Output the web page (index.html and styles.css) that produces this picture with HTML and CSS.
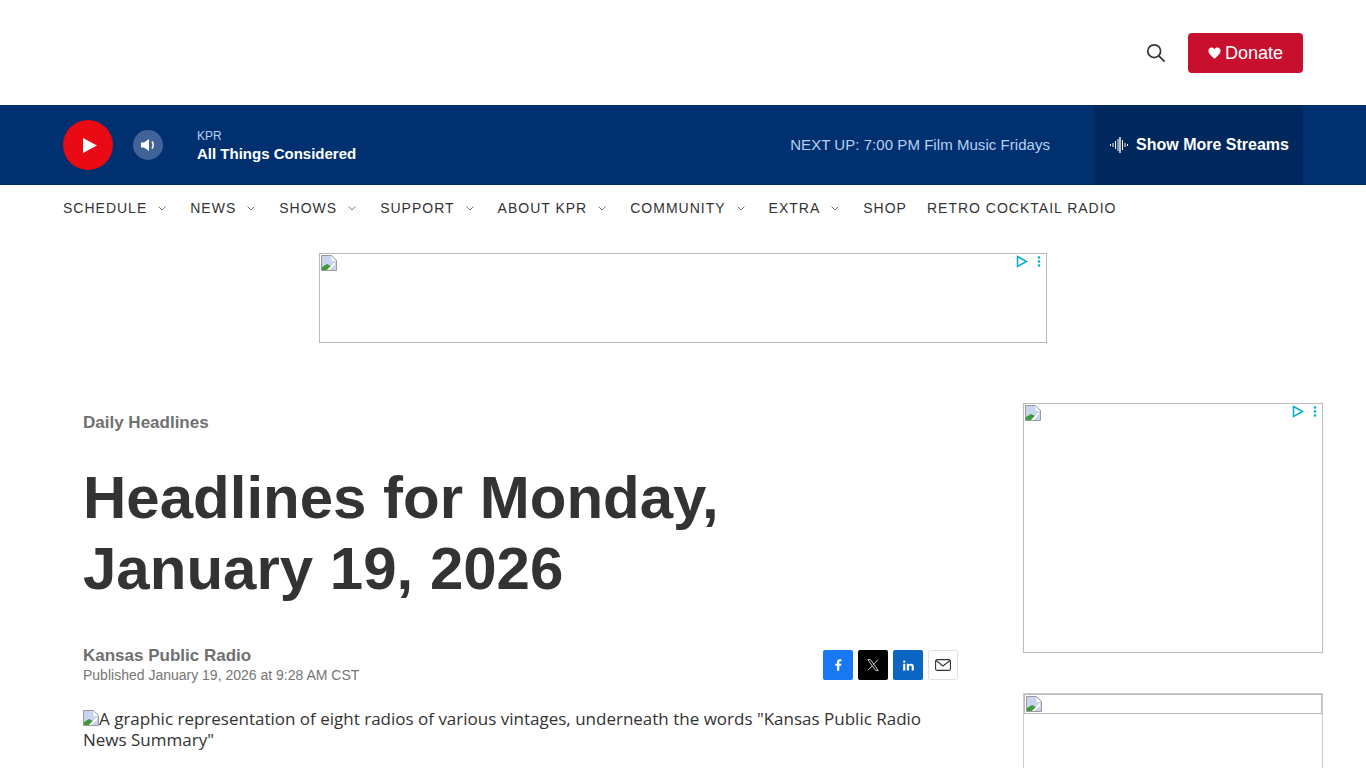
FILE: index.html
```html
<!DOCTYPE html>
<html lang="en">
<head>
    <meta charset="UTF-8">
    <title>Headlines for Monday, January 19, 2026 | KPR</title>
    <link rel="stylesheet" href="styles.css">
</head>
<body>
    <header class="top-bar">
        <button class="search-btn" aria-label="Search">
            <svg width="20" height="20" viewBox="0 0 20 20" fill="none" stroke="#333" stroke-width="1.7"><circle cx="8.2" cy="8.2" r="6.4"/><path d="M12.8 12.8 18.6 18.6"/></svg>
        </button>
        <a class="donate-btn" href="#">
            <svg width="13" height="12" viewBox="0 0 14 13" fill="#fff"><path d="M7 12.6C5 10.8.4 7.8.4 4.1.4 2 1.9.6 3.8.6 5.1.6 6.3 1.3 7 2.4 7.7 1.3 8.9.6 10.200.6c1.900 0 3.400 1.400 3.400 3.500 0 3.700-4.600 6.700-6.600 8.500z"/></svg>
            Donate
        </a>
    </header>

    <section class="player">
        <button class="play-btn" aria-label="Play">
            <svg width="14" height="15" viewBox="0 0 14 15" fill="#fff"><path d="M0 0 14 7.500 0 15z"/></svg>
        </button>
        <button class="volume-btn" aria-label="Volume">
            <svg width="16" height="14" viewBox="0 0 16 14"><path fill="#fff" d="M0 4.500h3L8 1v12L3 9.500H0z"/><path fill="none" stroke="#fff" stroke-width="1.500" d="M11 3.500c1.400 2 1.400 5 0 7"/></svg>
        </button>
        <div class="now-playing">
            <div class="station">KPR</div>
            <div class="program">All Things Considered</div>
        </div>
        <div class="next-up">NEXT UP: 7:00 PM Film Music Fridays</div>
        <a class="streams" href="#">
            <svg width="18" height="16" viewBox="0 0 18 16" stroke="#fff" stroke-width="1" fill="none"><path d="M.5 7v2M3 6v4M5.500 4v8M8 2v12"/><path stroke-width="1.400" d="M10 0v16"/><path d="M12.500 3v10M15 6v4M17.500 7v2"/></svg>
            Show More Streams
        </a>
    </section>

    <nav class="main-nav">
        <a class="nav-item" href="#">SCHEDULE <svg class="chev" viewBox="0 0 8 5"><path d="M.5.500 4 4 7.500.5"/></svg></a>
        <a class="nav-item" href="#">NEWS <svg class="chev" viewBox="0 0 8 5"><path d="M.5.500 4 4 7.500.5"/></svg></a>
        <a class="nav-item" href="#">SHOWS <svg class="chev" viewBox="0 0 8 5"><path d="M.5.500 4 4 7.500.5"/></svg></a>
        <a class="nav-item" href="#">SUPPORT <svg class="chev" viewBox="0 0 8 5"><path d="M.5.500 4 4 7.500.5"/></svg></a>
        <a class="nav-item" href="#">ABOUT KPR <svg class="chev" viewBox="0 0 8 5"><path d="M.5.500 4 4 7.500.5"/></svg></a>
        <a class="nav-item" href="#">COMMUNITY <svg class="chev" viewBox="0 0 8 5"><path d="M.5.500 4 4 7.500.5"/></svg></a>
        <a class="nav-item" href="#">EXTRA <svg class="chev" viewBox="0 0 8 5"><path d="M.5.500 4 4 7.500.5"/></svg></a>
        <a class="nav-item" href="#">SHOP</a>
        <a class="nav-item" href="#">RETRO COCKTAIL RADIO</a>
    </nav>

    <div class="top-ad-row">
        <div class="ad ad-leaderboard">
            <svg class="broken-img" viewBox="0 0 16 16"><path fill="#c9d4ee" stroke="#9a9a9a" d="M.5.500h10l5 5v10H.5z"/><path fill="#fff" d="M10.500 1v5h4.500z"/><path fill="#3f9a3a" d="M1 15v-3l5-3 4 2-4 4z"/><path fill="#fff" d="M6 15l8-8v2.500L8.500 15z"/></svg>
            <svg class="ad-choice" viewBox="0 0 26 14"><path fill="none" stroke="#00aecd" stroke-width="1.500" d="M1.500 1.500 10.500 6.500 1.500 11.500z"/><circle cx="23" cy="2.500" r="1.300" fill="#00aecd"/><circle cx="23" cy="6.500" r="1.300" fill="#00aecd"/><circle cx="23" cy="10.500" r="1.300" fill="#00aecd"/></svg>
        </div>
    </div>

    <main class="page-body">
        <article class="story">
            <a class="slug" href="#">Daily Headlines</a>
            <h1 class="headline">Headlines for Monday, January 19, 2026</h1>
            <div class="byline-row">
                <div class="byline">
                    <div class="author">Kansas Public Radio</div>
                    <div class="published">Published January 19, 2026 at 9:28 AM CST</div>
                </div>
                <div class="share">
                    <a class="share-btn share-fb" href="#" aria-label="Facebook">
                        <svg width="7" height="12" viewBox="0 0 8 13" fill="#fff"><path d="M2.300 13V7.300H.3V5h2V3.300C2.300 1.200 3.500 0 5.400 0h2v2.200H6.100c-.9 0-1.200.5-1.200 1.200V5h2.400l-.4 2.300h-2V13z"/></svg>
                    </a>
                    <a class="share-btn share-x" href="#" aria-label="X">
                        <svg width="12" height="12" viewBox="0 0 12 12" fill="none" stroke="#fff" stroke-width=".8"><path d="M.8.600h2.600l7.800 10.800H8.600zM11 .500 6.600 5.400M5.200 6.900.8 11.500"/></svg>
                    </a>
                    <a class="share-btn share-in" href="#" aria-label="LinkedIn">
                        <svg width="11" height="11" viewBox="0 0 13 12" fill="#fff"><path d="M.2 4h2.500v8H.2zM1.450 0a1.400 1.400 0 1 1 0 2.800 1.400 1.400 0 0 1 0-2.800zM4.500 4h2.400v1.100C7.300 4.400 8.200 3.800 9.500 3.800c2.500 0 3.300 1.600 3.300 3.900V12h-2.500V8.200c0-1.100-.2-2.200-1.500-2.200S7 7 7 8.200V12H4.500z"/></svg>
                    </a>
                    <a class="share-btn share-mail" href="#" aria-label="Email">
                        <svg width="16" height="12" viewBox="0 0 16 12" fill="none" stroke="#333" stroke-width="1.100"><rect x=".6" y=".6" width="14.800" height="10.800" rx="1.500"/><path d="M1 1.500 8 7l7-5.500"/></svg>
                    </a>
                </div>
            </div>
            <div class="lead-image">
                <svg class="broken-img" viewBox="0 0 16 16"><path fill="#c9d4ee" stroke="#9a9a9a" d="M.5.500h10l5 5v10H.5z"/><path fill="#fff" d="M10.500 1v5h4.500z"/><path fill="#3f9a3a" d="M1 15v-3l5-3 4 2-4 4z"/><path fill="#fff" d="M6 15l8-8v2.500L8.500 15z"/></svg>A graphic representation of eight radios of various vintages, underneath the words "Kansas Public Radio News Summary"
            </div>
        </article>

        <aside class="sidebar">
            <div class="ad ad-rect">
                <svg class="broken-img" viewBox="0 0 16 16"><path fill="#c9d4ee" stroke="#9a9a9a" d="M.5.500h10l5 5v10H.5z"/><path fill="#fff" d="M10.500 1v5h4.500z"/><path fill="#3f9a3a" d="M1 15v-3l5-3 4 2-4 4z"/><path fill="#fff" d="M6 15l8-8v2.500L8.500 15z"/></svg>
                <svg class="ad-choice" viewBox="0 0 26 14"><path fill="none" stroke="#00aecd" stroke-width="1.500" d="M1.500 1.500 10.500 6.500 1.500 11.500z"/><circle cx="23" cy="2.500" r="1.300" fill="#00aecd"/><circle cx="23" cy="6.500" r="1.300" fill="#00aecd"/><circle cx="23" cy="10.500" r="1.300" fill="#00aecd"/></svg>
            </div>
            <div class="ad ad-rect ad-second">
                <div class="ad-inner">
                    <svg class="broken-img" viewBox="0 0 16 16"><path fill="#c9d4ee" stroke="#9a9a9a" d="M.5.500h10l5 5v10H.5z"/><path fill="#fff" d="M10.500 1v5h4.500z"/><path fill="#3f9a3a" d="M1 15v-3l5-3 4 2-4 4z"/><path fill="#fff" d="M6 15l8-8v2.500L8.500 15z"/></svg>
                </div>
            </div>
        </aside>
    </main>
</body>
</html>
```

FILE: styles.css
```css
html, body {
    height: 768px;
    overflow: hidden;
}
body {
    margin: 0;
    font-family: "Liberation Sans", Arial, sans-serif;
    color: #333;
    background: #fff;
}
a {
    color: inherit;
    text-decoration: none;
}
button {
    border: none;
    padding: 0;
    background: none;
    cursor: pointer;
}

/* top bar */
.top-bar {
    display: flex;
    justify-content: flex-end;
    align-items: center;
    height: 105px;
    padding-right: 63px;
    box-sizing: border-box;
}
.search-btn {
    display: flex;
    margin-right: 22px;
}
.donate-btn {
    display: flex;
    align-items: center;
    justify-content: center;
    gap: 4px;
    width: 115px;
    height: 40px;
    padding-top: 1px;
    box-sizing: border-box;
    background: #c8102e;
    color: #fff;
    font-size: 18px;
    border-radius: 4px;
}

/* player */
.player {
    display: flex;
    align-items: center;
    height: 80px;
    padding: 0 63px;
    background: #003070;
}
.play-btn {
    display: flex;
    align-items: center;
    justify-content: center;
    width: 50px;
    height: 50px;
    border-radius: 50%;
    background: #e90a14;
    padding-left: 4px;
    box-sizing: border-box;
}
.volume-btn {
    display: flex;
    align-items: center;
    justify-content: center;
    width: 30px;
    height: 30px;
    margin-left: 20px;
    padding-left: 1px;
    box-sizing: border-box;
    border-radius: 50%;
    background: #40639a;
}
.now-playing {
    margin-left: 34px;
}
.station {
    margin-top: 1px;
    font-size: 12px;
    line-height: 14px;
    color: #b9d0f2;
}
.program {
    margin-top: 2px;
    font-size: 15px;
    line-height: 18px;
    font-weight: bold;
    color: #fff;
}
.next-up {
    margin-left: auto;
    margin-right: 44px;
    margin-bottom: 2px;
    font-size: 15px;
    letter-spacing: .05px;
    color: #b9d0f2;
}
.streams {
    display: flex;
    align-items: center;
    gap: 8px;
    height: 80px;
    padding: 0 14px 0 16px;
    background: #00285c;
    color: #fff;
    font-size: 16px;
    font-weight: bold;
}

/* nav */
.main-nav {
    display: flex;
    align-items: center;
    gap: 20px;
    height: 46px;
    padding: 0 63px;
}
.nav-item {
    display: flex;
    align-items: center;
    gap: 11px;
    font-size: 14px;
    letter-spacing: 1px;
    color: #333;
}
.chev {
    width: 8px;
    height: 5px;
    margin-right: 4px;
    fill: none;
    stroke: #777;
    stroke-width: 1;
}

/* ads */
.ad {
    position: relative;
    box-sizing: border-box;
    border: 1px solid #bbb;
    background: #fff;
}
.broken-img {
    display: block;
    width: 16px;
    height: 16px;
}
.ad > .broken-img,
.ad-inner > .broken-img {
    margin: 1px;
}
.ad-choice {
    position: absolute;
    top: 1px;
    right: 4px;
    width: 26px;
    height: 14px;
}
.top-ad-row {
    display: flex;
    justify-content: center;
    margin-top: 22px;
}
.ad-leaderboard {
    width: 728px;
    height: 90px;
}

/* main content */
.page-body {
    display: flex;
    justify-content: space-between;
    padding: 60px 43px 0 83px;
}
.story {
    width: 875px;
}
.slug {
    display: block;
    margin-top: 10px;
    font-size: 17px;
    line-height: 20px;
    font-weight: bold;
    color: #707070;
}
.headline {
    margin: 29px 0 0;
    width: 700px;
    font-size: 60px;
    line-height: 71px;
    font-weight: bold;
    color: #333;
}
.byline-row {
    display: flex;
    justify-content: space-between;
    align-items: center;
    margin-top: 42px;
}
.author {
    font-size: 17px;
    line-height: 20px;
    font-weight: bold;
    color: #707070;
}
.published {
    font-size: 14px;
    line-height: 18px;
    color: #757575;
}
.share {
    display: flex;
    gap: 5px;
}
.share-btn {
    display: flex;
    align-items: center;
    justify-content: center;
    width: 30px;
    height: 30px;
    box-sizing: border-box;
    border-radius: 2px;
}
.share-fb {
    background: #1877f2;
}
.share-x {
    background: #000;
}
.share-in {
    background: #0a66c2;
}
.share-mail {
    background: #fff;
    border: 1px solid #e2e2e2;
}
.lead-image {
    margin-top: 24px;
    font-family: "Open Sans", sans-serif;
    font-size: 17px;
    line-height: 21px;
    color: #333;
}
.lead-image .broken-img {
    display: inline-block;
    vertical-align: -1px;
}

/* sidebar */
.sidebar {
    width: 300px;
}
.ad-rect {
    height: 250px;
}
.ad-second {
    margin-top: 40px;
    border-color: #ccc;
}
.ad-inner {
    height: 20px;
    box-sizing: border-box;
    border: 1px solid #bbb;
}
```
